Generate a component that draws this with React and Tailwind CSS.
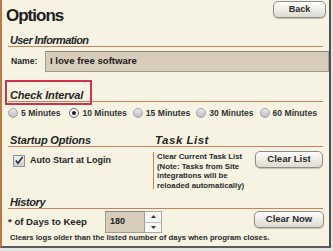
import React from "react";

const headerFont =
  "font-['Liberation_Sans',Arial,sans-serif] font-bold italic text-[#262626] whitespace-nowrap";

const SectionHeader = ({ children, className = "" }) => (
  <div className={`h-[12px] border-b border-[#c8825c] pl-[2px] text-[11px] leading-[11px] ${headerFont} ${className}`}>
    {children}
  </div>
);

const Button = ({ children, className = "" }) => (
  <button className={`flex items-center justify-center rounded-[5px] border border-[#8e8c86] bg-gradient-to-b from-[#fefefc] to-[#dedad0] text-[9.5px] font-bold text-[#2a2a2a] shadow-[0_1px_1px_rgba(0,0,0,0.2)] ${className}`}>
    {children}
  </button>
);

const Radio = ({ label, checked, className = "" }) => (
  <div className={`flex items-center gap-[3px] ${className}`}>
    <span
      className={`flex h-[10px] w-[10px] items-center justify-center rounded-full border ${
        checked
          ? "border-[#6f6f6f] bg-gradient-to-b from-[#ffffff] to-[#e4e4e4]"
          : "border-[#a3a3a3] bg-gradient-to-b from-[#e9e9e9] to-[#bdbdbd]"
      }`}
    >
      {checked && <span className="h-[4px] w-[4px] rounded-full bg-[#1d1d1d]" />}
    </span>
    <span className="text-[8.6px] font-bold text-[#333]">{label}</span>
  </div>
);

export default function App() {
  return (
    <div className="h-[251px] w-[333px] bg-[#e4e4e2] font-['Liberation_Sans',Arial,sans-serif] text-[#262626]">
      <div className="h-[248px] w-[331px] overflow-hidden border-b-2 border-l-2 border-r-2 border-b-[#5c5c5c] border-l-[#c27743] border-r-[#4f4f4f] bg-[#f6f3e3] pl-[6px] pr-[6px]">
        {/* header */}
        <div className="flex h-[27px] items-start justify-between">
          <div className="-ml-[2px] mt-[5px] text-[17px] leading-[22px] font-bold tracking-[-1px] text-[#1f1f1f]">
            Options
          </div>
          <Button className="-mr-[3px] mt-[1px] h-[17px] w-[53px] text-[9px]">Back</Button>
        </div>

        <SectionHeader className="mt-[8px] tracking-[-0.6px]">User Information</SectionHeader>

        <div className="mt-[4px] flex h-[21px] items-center">
          <span className="w-[37px] pl-[3px] text-[8.6px] font-bold">Name:</span>
          <div className="-mr-[6px] flex h-[21px] flex-1 items-center border border-[#a39d90] border-t-[#8a857a] bg-[#d7ccba] pl-[4px] text-[9.6px] font-bold text-[#222]">
            I love free software
          </div>
        </div>

        <div className="relative mt-[18px]">
          <SectionHeader className="tracking-[-0.15px]">Check Interval</SectionHeader>
          <div className="absolute -left-[3px] -top-[10px] h-[25px] w-[87px] border-2 border-[#cf3349]" />
        </div>

        <div className="mt-[5px] flex h-[12px] items-center">
          <Radio label="5 Minutes" className="w-[62px]" />
          <Radio label="10 Minutes" checked className="w-[64px]" />
          <Radio label="15 Minutes" className="w-[64px]" />
          <Radio label="30 Minutes" className="w-[64px]" />
          <Radio label="60 Minutes" className="w-[64px]" />
        </div>

        <div className={`mt-[16px] flex h-[12px] border-b border-[#c8825c] text-[11px] leading-[11px] ${headerFont}`}>
          <div className="w-[145px] pl-[2px] tracking-[-0.15px]">Startup Options</div>
          <div className="pl-[2px] text-[11.5px] tracking-[0.5px]">Task List</div>
        </div>

        <div className="flex h-[45px]">
          <div className="w-[145px]">
            <div className="ml-[5px] mt-[7px] flex items-center gap-[5px]">
              <span className="flex h-[12px] w-[12px] items-center justify-center border border-[#8f8f8f] bg-gradient-to-b from-[#f4f4f4] to-[#cfcfcf]">
                <svg width="11" height="11" viewBox="0 0 11 11">
                  <path d="M2 5.5 L4.5 8.5 L9.5 1.5" fill="none" stroke="#2a2a2a" strokeWidth="1.8" />
                </svg>
              </span>
              <span className="text-[9px] font-bold">Auto Start at Login</span>
            </div>
          </div>
          <div className="flex flex-1 items-start justify-between">
            <div className="mt-[5px] h-[37px] border-l border-[#c8825c] pl-[3px] text-[7.8px] leading-[9.5px] font-bold whitespace-nowrap text-[#2a2a2a]">
              Clear Current Task List
              <br />
              (Note: Tasks from Site
              <br />
              integrations will be
              <br />
              reloaded automatically)
            </div>
            <Button className="mt-[4px] h-[17px] w-[68px]">Clear List</Button>
          </div>
        </div>

        <SectionHeader className="mt-[5px] tracking-[-0.4px]">History</SectionHeader>

        <div className="mt-[2px] flex h-[22px] items-start">
          <div className="flex h-[22px] w-[97px] items-center text-[9.6px] font-bold">* of Days to Keep</div>
          <div className="flex h-[22px]">
            <div className="flex w-[40px] items-center border border-[#a39d90] border-t-[#8a857a] bg-[#d7ccba] pl-[4px] text-[9px] font-bold">
              180
            </div>
            <div className="flex w-[17px] flex-col border border-l-0 border-[#a8a8a8] bg-[#f7f7f4]">
              <div className="flex flex-1 items-center justify-center border-b border-[#bdbdbd]">
                <svg width="5" height="3" viewBox="0 0 5 3">
                  <path d="M0 3 L2.5 0 L5 3 Z" fill="#333" />
                </svg>
              </div>
              <div className="flex flex-1 items-center justify-center">
                <svg width="5" height="3" viewBox="0 0 5 3">
                  <path d="M0 0 L2.5 3 L5 0 Z" fill="#333" />
                </svg>
              </div>
            </div>
          </div>
          <Button className="-mr-[1px] ml-auto h-[17px] w-[70px]">Clear Now</Button>
        </div>

        <div className="pl-[2px] text-[7.7px] leading-[10px] font-bold whitespace-nowrap text-[#2a2a2a]">
          Clears logs older than the listed number of days when program closes.
        </div>
      </div>
    </div>
  );
}
